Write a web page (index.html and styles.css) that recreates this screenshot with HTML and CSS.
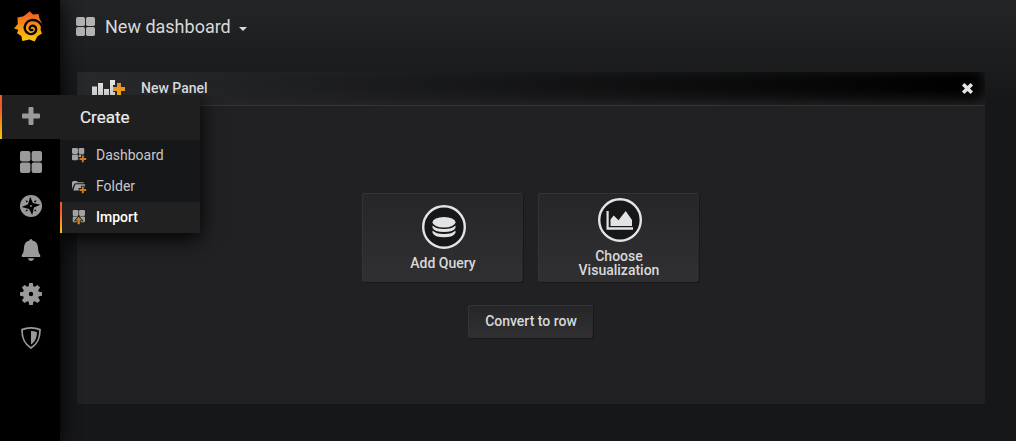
FILE: index.html
```html
<!DOCTYPE html>
<html lang="en">
<head>
<meta charset="utf-8">
<title>New dashboard</title>
<link rel="stylesheet" href="styles.css">
</head>
<body>
<svg class="defs" width="0" height="0">
  <defs>
    <linearGradient id="flame" x1="0" y1="0" x2="0" y2="1"><stop offset="0" stop-color="#f05a28"/><stop offset="1" stop-color="#fbca0a"/></linearGradient>
    <linearGradient id="amber" x1="0" y1="0" x2="0" y2="1"><stop offset="0" stop-color="#ef843c"/><stop offset="1" stop-color="#e5a80b"/></linearGradient>
    <linearGradient id="silver" x1="0" y1="0" x2="0" y2="1"><stop offset="0" stop-color="#e8e8e8"/><stop offset="1" stop-color="#c2c2c2"/></linearGradient>
    <symbol id="tiles" viewBox="0 0 22 22"><rect width="10.4" height="10.4" rx="2"/><rect x="11.6" width="10.4" height="10.4" rx="2"/><rect y="11.6" width="10.4" height="10.4" rx="2"/><rect x="11.6" y="11.6" width="10.4" height="10.4" rx="2"/></symbol>
  </defs>
</svg>
<div class="app">
  <nav class="sidebar">
    <a class="logo"><svg width="30" height="32" viewBox="0 0 30 32">
      <path fill="url(#flame)" d="M15.700 .3L19 3.600L24.500 2.900L25.600 7.900Q28 11 28.400 14.200L27 15L26.600 18.800L28 22.500L23.500 25.200L20.600 30.500L15.500 28.600L8.300 30L7.400 25L3 22.300L4.300 18.800L0 17.500L3.800 13L3.400 6.500L9.600 5.300Z"/>
      <path fill="none" stroke="#000" stroke-width="2.300" stroke-linecap="round" d="M28.300 15.800C26.500 10.800 21.500 8.300 17 9.200C12.300 10.200 9.800 14.600 11 18.600C12.300 22.800 17 24.400 20.300 22C23 20 22.800 16.200 20 14.900C17.800 14 15.300 15.500 15.700 17.800C16 19.200 17.300 19.400 18.400 18.900"/>
    </svg></a>
    <a class="nav-item active"><svg width="18" height="18" viewBox="0 0 18 18"><path d="M7.500 0h3q1 0 1 1v5.500H17q1 0 1 1v3q0 1-1 1h-5.500V17q0 1-1 1h-3q-1 0-1-1v-5.500H1q-1 0-1-1v-3q0-1 1-1h5.500V1q0-1 1-1z"/></svg></a>
    <a class="nav-item"><svg width="22" height="22"><use href="#tiles"/></svg></a>
    <a class="nav-item"><svg width="22" height="22" viewBox="0 0 22 22"><circle cx="11" cy="11" r="11"/><path fill="#000" d="M10.200 1.800L12.900 8L20.400 9.700L14 12.600L12.200 20L9 14L1.700 12L8 9.300ZM5.500 5l2.500 1.300-1.400 1.400zM16.600 5l-1.300 2.700-1.400-1.400zM5.400 16.800l1.300-2.600 1.300 1.400zM16.600 16.800L14 15.600l1.300-1.400z"/><circle cx="11" cy="11" r=".9"/></svg></a>
    <a class="nav-item"><svg width="22" height="24" viewBox="0 0 22 24"><path d="M11 1q1.300 0 1.500 1.600c4 .9 5.400 4 5.600 8 .2 3.400.8 4.900 2.100 6.200V19H1.800v-2.200c1.300-1.300 1.900-2.800 2.100-6.200.2-4 1.600-7.100 5.600-8Q9.700 1 11 1zM7.800 20.200h6.400q-.7 2.500-3.200 2.700-2.500-.2-3.200-2.700z"/></svg></a>
    <a class="nav-item"><svg width="22" height="22" viewBox="0 0 22 22"><path fill-rule="evenodd" d="M9.200 0h3.600l.5 3.200 1.500.6 2.600-1.900 2.700 2.700-1.900 2.600.6 1.500 3.200.5v3.600l-3.200.5-.6 1.500 1.900 2.600-2.700 2.700-2.600-1.900-1.500.6-.5 3.200H9.200l-.5-3.200-1.500-.6-2.600 1.900-2.700-2.700 1.900-2.600-.6-1.500-3.200-.5V9.200l3.200-.5.6-1.500-1.900-2.600 2.700-2.700 2.600 1.900 1.500-.6zM11 8.800a2.200 2.200 0 1 0 0 4.400 2.200 2.200 0 0 0 0-4.400z"/></svg></a>
    <a class="nav-item"><svg width="20" height="22" viewBox="0 0 20 22"><path fill="none" stroke="#9a9a9a" stroke-width="1.800" stroke-linejoin="round" d="M1 2.600Q10-.8 19 2.600C19 12 16.500 17 10 21C3.500 17 1 12 1 2.600Z"/><path d="M10 4Q13.200 4 16 5.200C15.700 11 14 14.500 10 17.600Z"/></svg></a>
    <div class="menu">
      <div class="menu-title">Create</div>
      <a class="menu-item"><svg width="15" height="15" viewBox="0 0 15 15"><use href="#tiles" width="12.500" height="12.500"/><path class="accent" d="M9.800 7.600h2v2.300h2.400v2h-2.400v2.400h-2v-2.400H7.500v-2h2.300z"/></svg>Dashboard</a>
      <a class="menu-item"><svg width="15" height="15" viewBox="0 0 15 15"><path d="M0 3.500Q0 2 1.500 2h3L6 3.300h5q1 0 1 1H4Q2.500 4.300 2 5.600L0 10zM4 5.300h8.700q.8 0 .5.800L11.800 11.500H1.300L3 6.100Q3.300 5.300 4 5.300z"/><path class="accent" d="M9.800 7.600h2v2.300h2.400v2h-2.400v2.400h-2v-2.400H7.500v-2h2.300z"/></svg>Folder</a>
      <a class="menu-item selected"><svg width="15" height="15" viewBox="0 0 15 15"><use href="#tiles" x=".5" width="12.500" height="12.500"/><path class="accent" d="M6.700 6.800L10 10.500H7.900V14.300H5.500v-3.800H3.400z"/></svg>Import</a>
    </div>
  </nav>
  <main class="main">
    <header class="toolbar"><svg width="19" height="19"><use href="#tiles"/></svg><span>New dashboard</span><i class="caret"></i></header>
    <section class="panel">
      <header class="panel-head">
        <svg width="34" height="18" viewBox="0 0 34 18"><path fill="url(#silver)" d="M0 6.500h5V18H0zM6 3h5v15H6zM12 9h5v9h-5zM18 0h5v5h-2v7h2v6h-5z"/><path fill="url(#amber)" d="M25 3h4v4h4v4h-4v4h-4v-4h-4V7h4z"/></svg>
        <span>New Panel</span>
        <svg class="close" width="13" height="13" viewBox="0 0 13 13"><path d="M2.200 2.200l8.600 8.600M10.800 2.200l-8.600 8.600"/></svg>
      </header>
      <div class="panel-body">
        <div class="choices">
          <button class="button choice"><svg width="44" height="44" viewBox="0 0 44 44"><circle class="ring" cx="22" cy="22" r="20.800"/><ellipse cx="22" cy="17.200" rx="11.500" ry="5.300"/><path d="M10.500 20.500Q14 24 22 24t11.500-3.500v2.200Q31.500 27 22 27t-11.500-4.300zM10.500 25.500Q14 29 22 29t11.500-3.500v2.200Q31.500 32.200 22 32.200t-11.500-4.500z"/></svg><span>Add Query</span></button>
          <button class="button choice"><svg width="44" height="44" viewBox="0 0 44 44"><circle class="ring" cx="22" cy="22" r="20.800"/><path d="M8.500 13h2.200v16.300H35v2.400H8.500zM12.500 21.500L15.700 17.500L20.500 22.300L27.700 13L34 22V28H12.500z"/></svg><span>Choose<br>Visualization</span></button>
        </div>
        <button class="button convert">Convert to row</button>
      </div>
    </section>
  </main>
</div>
</body>
</html>
```
FILE: styles.css
```css
* { box-sizing: border-box; }
body { margin: 0; font-family: Roboto, sans-serif; font-size: 14px; color: #d8d9da; background: #161719; }
svg { display: block; flex: none; }
.defs { position: absolute; }
.app { display: flex; height: 441px; overflow: hidden; }

.sidebar { position: relative; z-index: 2; width: 60px; flex: none; background: #000; box-shadow: 0 0 20px #000; fill: #9a9a9a; }
.logo { display: block; height: 95px; padding: 11px 0 0 14px; }
.nav-item { display: flex; align-items: center; justify-content: center; height: 44px; padding-left: 2px; }
.nav-item.active { height: 44px; margin-bottom: 1px; padding: 0 2px 2px 2px; background: #1f1f20; border-left: 2px solid; border-image: linear-gradient(#f05a28 30%, #fbca0a 99%) 1; }

.menu { position: absolute; left: 60px; top: 95px; width: 140px; background: #161719; box-shadow: 0 5px 20px #000; clip-path: inset(0 -30px -30px 0); }
.menu-title { height: 45px; padding-left: 20px; font-size: 17px; line-height: 45px; color: #ececec; -webkit-text-stroke: .2px #ececec; background: #1f1f20; }
.menu-item { --surface: #161719; display: flex; align-items: center; gap: 9px; height: 31px; padding: 0 0 2px 12px; color: #c7c8c9; fill: #a3a3a3; }
.menu-item svg { margin-top: 2px; }
.menu-item.selected { --surface: #212122; padding-left: 10px; color: #fff; font-weight: 500; background: #212122; border-left: 2px solid; border-image: linear-gradient(#f05a28 30%, #fbca0a 99%) 1; }
.accent { fill: #c97d21; stroke: var(--surface); stroke-width: 1.6; paint-order: stroke; }

.main { flex: 1; padding: 0 31px 0 17px; background: linear-gradient(#222426 10px, #161719 100px); }
.toolbar { display: flex; align-items: center; height: 71px; padding-bottom: 19px; fill: #b3b3b3; font-size: 18px; color: #d8d9da; }
.toolbar svg { margin: 1px 10px 0 -1px; }
.caret { margin: 5px 0 0 8px; border: 4px solid transparent; border-top-color: #d8d9da; border-bottom: 0; }

.panel { display: flex; flex-direction: column; height: 333px; background: #212124; border-radius: 3px; }
.panel-head { display: flex; align-items: center; height: 35px; padding: 0 11px 2px 15px; font-weight: 500; background: linear-gradient(90deg, #292a2d, #000); box-shadow: inset 0 -4px 14px #262628; border-top: 1px solid #1c1d1e; border-bottom: 1px solid #343436; }
.panel-head > svg:first-child { margin-top: 2px; }
.panel-head > span { margin-left: 15px; }
.close { margin-left: auto; margin-top: 2px; fill: none; stroke: #e3e3e3; stroke-width: 3.6; }
.panel-body { display: flex; flex: 1; flex-direction: column; align-items: center; gap: 23px; padding: 87px 1px 0 0; }
.choices { display: flex; gap: 15px; }
.button { display: flex; align-items: center; justify-content: center; padding: 0 0 1px; font: 500 14px/14px Roboto, sans-serif; color: #d8d9da; border: 1px solid #343436; border-right-color: #2a2a2c; border-bottom-color: #2e2e30; border-radius: 3px; background: linear-gradient(#262628, #303032); box-shadow: 1px 1px 0 #171718; }
.choice { flex-direction: column; gap: 7px; width: 161px; height: 89px; padding: 0 0 0 1px; fill: #e3e3e3; }
.choice svg { margin-left: 2px; }
.choice:last-child { gap: 7px; padding-bottom: 1px; }
.convert { width: 125px; height: 33px; padding-left: 1px; }
.ring { fill: #161719; stroke: #e3e3e3; stroke-width: 2.400; }
```
